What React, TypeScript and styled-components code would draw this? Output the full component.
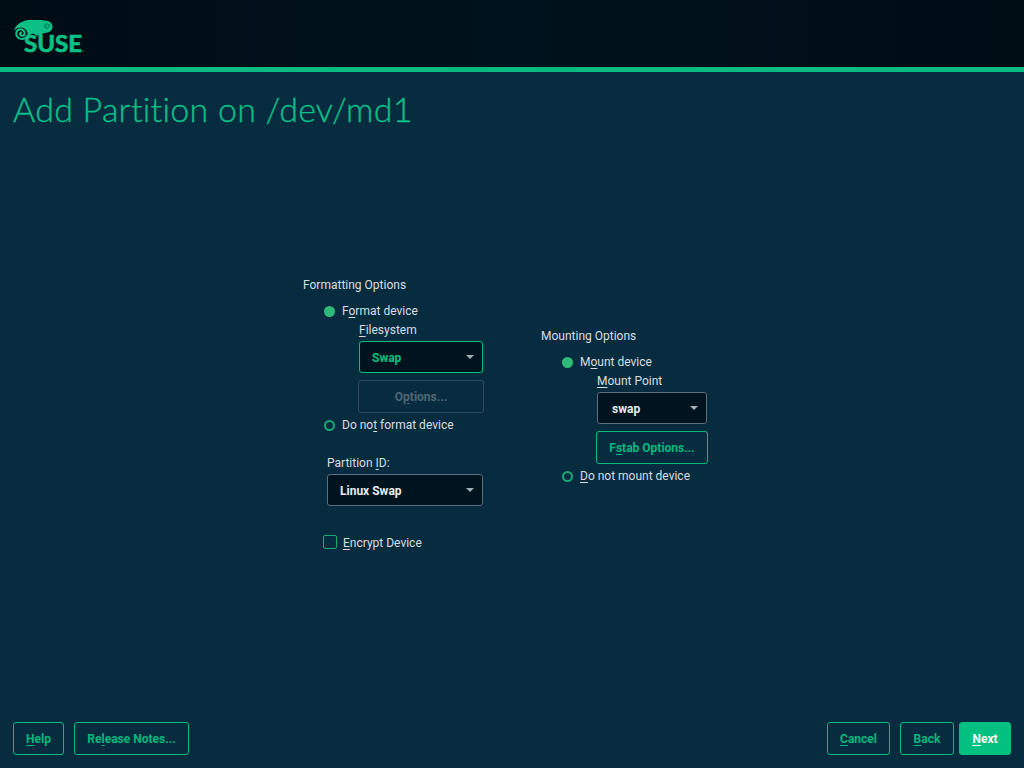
import { createGlobalStyle, styled } from "styled-components";

const GlobalStyle = createGlobalStyle`
  html, body {
    margin: 0;
    padding: 0;
    height: 100%;
    background: #072c40;
  }
  #root {
    height: 100%;
  }
`;

const Page = styled.div`
  width: 1024px;
  height: 768px;
  display: flex;
  flex-direction: column;
  background: #072c40;
  color: #d9dee1;
  font-family: Roboto, "Liberation Sans", sans-serif;
  font-size: 12px;
  overflow: hidden;
`;

const Banner = styled.header`
  height: 47px;
  flex: none;
  display: flex;
  align-items: flex-start;
  padding: 20px 0 0 14px;
  background: linear-gradient(90deg, #000c14, #00121d 50%, #000c14);
  border-bottom: 5px solid #0abb81;
`;

const Title = styled.h1`
  margin: 0;
  padding: 19px 13px 0;
  height: 46px;
  flex: none;
  font-family: Lato, "Open Sans", sans-serif;
  font-weight: 300;
  font-size: 34px;
  line-height: 36px;
  letter-spacing: 0.25px;
  color: #0cc088;
  -webkit-text-stroke: 0.3px #0cc088;
`;

const Content = styled.main`
  flex: 1;
  display: flex;
  justify-content: flex-start;
  align-items: flex-start;
  gap: 57px;
  padding: 140px 0 0 303px;
`;

const Column = styled.section<{ $top?: number }>`
  display: flex;
  flex-direction: column;
  margin-top: ${(p) => p.$top ?? 0}px;
`;

const Legend = styled.div`
  height: 16px;
  line-height: 16px;
  margin-bottom: 10px;
`;

const Mnemonic = styled.span`
  text-decoration: underline;
  text-underline-offset: 2px;
`;

const RadioRow = styled.div`
  display: flex;
  align-items: center;
  height: 16px;
  line-height: 16px;
  padding-left: 21px;
  gap: 7px;
`;

const RadioDot = styled.span<{ $on?: boolean }>`
  width: 11px;
  height: 11px;
  flex: none;
  box-sizing: border-box;
  border-radius: 50%;
  border: 2px solid ${(p) => (p.$on ? "#30ba78" : "#1ba877")};
  background: ${(p) => (p.$on ? "#30ba78" : "transparent")};
`;

const Nested = styled.div<{ $indent: number; $gap?: number }>`
  display: flex;
  flex-direction: column;
  padding-left: ${(p) => p.$indent}px;
  margin-top: ${(p) => p.$gap ?? 0}px;
`;

const FieldLabel = styled.div`
  height: 16px;
  line-height: 16px;
  margin-bottom: 3px;
`;

const Select = styled.div<{ $w: number; $focus?: boolean; $inset?: number }>`
  width: ${(p) => p.$w}px;
  height: 32px;
  box-sizing: border-box;
  display: flex;
  align-items: center;
  justify-content: space-between;
  padding: 1px 8px 0 ${(p) => p.$inset ?? 12}px;
  background: #00141f;
  border: 1px solid ${(p) => (p.$focus ? "#02c07f" : "#5a6f7c")};
  border-radius: 3px;
  color: ${(p) => (p.$focus ? "#02c07f" : "#e8ebed")};
  font-weight: 700;
`;

const Caret = styled.span`
  width: 0;
  height: 0;
  margin-top: -1px;
  border-left: 4px solid transparent;
  border-right: 4px solid transparent;
  border-top: 4px solid #a5aeb4;
`;

const Button = styled.button<{ $w: number; $variant?: "primary" | "disabled" }>`
  width: ${(p) => p.$w}px;
  height: 33px;
  flex: none;
  padding: 0;
  box-sizing: border-box;
  font-family: inherit;
  font-size: 12px;
  font-weight: 700;
  border-radius: 3px;
  border: 1px solid
    ${(p) =>
      p.$variant === "primary"
        ? "#02c07f"
        : p.$variant === "disabled"
          ? "#2f4c5e"
          : "#02bd7e"};
  background: ${(p) => (p.$variant === "primary" ? "#02c07f" : "transparent")};
  color: ${(p) =>
    p.$variant === "primary"
      ? "#ffffff"
      : p.$variant === "disabled"
        ? "#4f6675"
        : "#02b87c"};
`;

const OptionsButton = styled(Button)`
  margin: 7px 0 4px -1px;
`;

const PartitionLabel = styled.div`
  height: 16px;
  line-height: 16px;
  margin: 22px 0 3px 24px;
`;

const PartitionSelect = styled.div`
  margin-left: 24px;
`;

const CheckRow = styled.div`
  display: flex;
  align-items: center;
  height: 16px;
  line-height: 16px;
  gap: 6px;
  margin: 28px 0 0 20px;
`;

const CheckBox = styled.span`
  width: 14px;
  height: 14px;
  box-sizing: border-box;
  border: 1px solid #1ba877;
  border-radius: 2px;
`;

const CheckText = styled.span`
  padding-top: 2px;
`;

const Footer = styled.footer`
  flex: none;
  display: flex;
  align-items: center;
  padding: 0 13px 13px;
`;

const Group = styled.div<{ $gap: number }>`
  display: flex;
  gap: ${(p) => p.$gap}px;
`;

const Spacer = styled.div`
  flex: 1;
`;

const NavGroup = styled.div`
  display: flex;
  & > button:first-child {
    margin-right: 10px;
  }
  & > button:last-child {
    margin-left: 5px;
  }
`;

function SuseLogo() {
  return (
    <svg width="74" height="42" viewBox="14 20 74 42" fill="none">
      <path
        d="M14 31C15 25 22 20 31 19.8C38 19.6 44 20 48 21C51.5 22 53 25 52.4 28C51.8 31.4 48 32.6 45 33C43 33.4 42 34 41.5 35.6L39 35.6C38.8 35 38.6 34.6 38.2 34C38.2 34.6 38.4 35.2 38.6 35.6L35.6 35.6C35 34 34 33.4 32 33.8C30.5 34.2 29.5 35 28 36.4C28 31 25 27.5 21 27.5C17.5 27.5 15.5 29 14 31Z"
        fill="#0bc084"
      />
      <path
        d="M27.4 35.5C25.8 38.8 21.5 39.8 18.6 38C15.6 36 15.4 32 17.8 30.1C20.2 28.3 24.2 29.5 24.7 32.6C25.1 35 22.6 36.6 20.8 35.4C19.5 34.5 19.9 32.8 21.2 32.5"
        stroke="#0bc084"
        strokeWidth="2"
        strokeLinecap="round"
      />
      <path
        d="M46 26.5C45 24.8 46.8 23.2 48.2 24C49.8 24.9 49.6 27.4 47.8 28C45.8 28.6 44 27.2 44 25.2"
        stroke="#066b56"
        strokeWidth="1"
        strokeLinecap="round"
      />
      <text
        x="24"
        y="52"
        fontFamily="Lato, Roboto, sans-serif"
        fontWeight="700"
        fontSize="22"
        fill="#0bc084"
        stroke="#0bc084"
        strokeWidth="0.7"
        textLength="58"
        lengthAdjust="spacingAndGlyphs"
      >
        SUSE
      </text>
      <circle cx="83.5" cy="51" r="0.6" fill="#0bc084" />
    </svg>
  );
}

function Radio({ on, children }: { on?: boolean; children: React.ReactNode }) {
  return (
    <RadioRow>
      <RadioDot $on={on} />
      <span>{children}</span>
    </RadioRow>
  );
}

export default function App() {
  return (
    <Page>
      <GlobalStyle />
      <Banner>
        <SuseLogo />
      </Banner>
      <Title>Add Partition on /dev/md1</Title>
      <Content>
        <Column>
          <Legend>Formatting Options</Legend>
          <Radio on>
            F<Mnemonic>o</Mnemonic>rmat device
          </Radio>
          <Nested $indent={56} $gap={3}>
            <FieldLabel>
              <Mnemonic>F</Mnemonic>ilesystem
            </FieldLabel>
            <Select $w={124} $focus>
              Swap
              <Caret />
            </Select>
            <OptionsButton $w={126} $variant="disabled">
              O<Mnemonic>p</Mnemonic>tions...
            </OptionsButton>
          </Nested>
          <Radio>
            Do no<Mnemonic>t</Mnemonic> format device
          </Radio>
          <PartitionLabel>
            Partition <Mnemonic>I</Mnemonic>D:
          </PartitionLabel>
          <PartitionSelect>
            <Select $w={156}>
              Linux Swap
              <Caret />
            </Select>
          </PartitionSelect>
          <CheckRow>
            <CheckBox />
            <CheckText>
              <Mnemonic>E</Mnemonic>ncrypt Device
            </CheckText>
          </CheckRow>
        </Column>
        <Column $top={51}>
          <Legend>Mounting Options</Legend>
          <Radio on>
            M<Mnemonic>o</Mnemonic>unt device
          </Radio>
          <Nested $indent={56} $gap={3}>
            <FieldLabel>
              <Mnemonic>M</Mnemonic>ount Point
            </FieldLabel>
            <Select $w={110} $inset={14}>
              swap
              <Caret />
            </Select>
            <OptionsButton $w={112}>
              F<Mnemonic>s</Mnemonic>tab Options...
            </OptionsButton>
          </Nested>
          <Radio>
            <Mnemonic>D</Mnemonic>o not mount device
          </Radio>
        </Column>
      </Content>
      <Footer>
        <Group $gap={10}>
          <Button $w={51}>
            <Mnemonic>H</Mnemonic>elp
          </Button>
          <Button $w={115}>
            Re<Mnemonic>l</Mnemonic>ease Notes...
          </Button>
        </Group>
        <Spacer />
        <NavGroup>
          <Button $w={63}>
            <Mnemonic>C</Mnemonic>ancel
          </Button>
          <Button $w={54}>
            <Mnemonic>B</Mnemonic>ack
          </Button>
          <Button $w={52} $variant="primary">
            <Mnemonic>N</Mnemonic>ext
          </Button>
        </NavGroup>
      </Footer>
    </Page>
  );
}
